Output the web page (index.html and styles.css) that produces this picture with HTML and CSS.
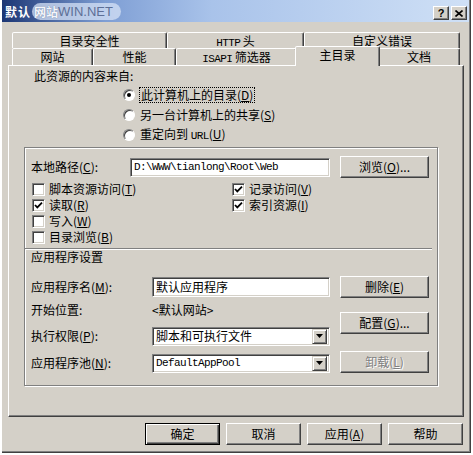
FILE: index.html
```html
<!DOCTYPE html>
<html lang="zh-CN">
<head>
  <meta charset="UTF-8">
  <title>默认网站 属性</title>
  <link rel="stylesheet" href="styles.css">
</head>
<body>
  <div class="window">
    <div class="titlebar">
      <span class="title">默认</span>
      <span class="watermark">网站<span class="wm-latin">WIN.NET</span></span>
      <div class="caption-buttons">
        <span class="cap-btn help">?</span>
        <span class="cap-btn">
          <svg width="8" height="7" viewBox="0 0 8 7"><path d="M0.5 0.5 L7.5 6.5 M7.5 0.5 L0.5 6.5" stroke="#000" stroke-width="1.6"/></svg>
        </span>
      </div>
    </div>

    <div class="client">
      <div class="tabs">
        <div class="tab-row">
          <div class="tab tab-security">目录安全性</div>
          <div class="tab tab-http"><span class="mono">HTTP</span> 头</div>
          <div class="tab tab-errors">自定义错误</div>
        </div>
        <div class="tab-row front">
          <div class="tab tab-site">网站</div>
          <div class="tab tab-perf">性能</div>
          <div class="tab tab-isapi"><span class="mono">ISAPI</span> 筛选器</div>
          <div class="tab tab-home active">主目录</div>
          <div class="tab tab-docs">文档</div>
        </div>
      </div>

      <div class="panel">
        <div class="source-title">此资源的内容来自:</div>
        <div class="radios">
          <div class="radio-row">
            <span class="radio checked"></span>
            <span class="focus">此计算机上的目录(<u>D</u>)</span>
          </div>
          <div class="radio-row">
            <span class="radio"></span>
            <span>另一台计算机上的共享(<u>S</u>)</span>
          </div>
          <div class="radio-row">
            <span class="radio"></span>
            <span>重定向到 <span class="mono">URL</span>(<u>U</u>)</span>
          </div>
        </div>

        <div class="group">
          <div class="path-row">
            <span class="label">本地路径(<u>C</u>):</span>
            <div class="textbox path"><span class="mono">D:\WWW\tianlong\Root\Web</span></div>
            <button class="btn">浏览(<u>O</u>)...</button>
          </div>

          <div class="checks">
            <div class="check-col">
              <div class="check-row"><span class="checkbox"></span>脚本资源访问(<u>T</u>)</div>
              <div class="check-row"><span class="checkbox checked"><svg width="11" height="11" viewBox="0 0 11 11"><path d="M2 5 L4.3 7.4 L9 2.6" fill="none" stroke="#000" stroke-width="1.8"/></svg></span>读取(<u>R</u>)</div>
              <div class="check-row"><span class="checkbox"></span>写入(<u>W</u>)</div>
              <div class="check-row"><span class="checkbox"></span>目录浏览(<u>B</u>)</div>
            </div>
            <div class="check-col">
              <div class="check-row"><span class="checkbox checked"><svg width="11" height="11" viewBox="0 0 11 11"><path d="M2 5 L4.3 7.4 L9 2.6" fill="none" stroke="#000" stroke-width="1.8"/></svg></span>记录访问(<u>V</u>)</div>
              <div class="check-row"><span class="checkbox checked"><svg width="11" height="11" viewBox="0 0 11 11"><path d="M2 5 L4.3 7.4 L9 2.6" fill="none" stroke="#000" stroke-width="1.8"/></svg></span>索引资源(<u>I</u>)</div>
            </div>
          </div>

          <div class="separator"></div>
          <div class="app-title">应用程序设置</div>

          <div class="app">
            <div class="app-fields">
              <div class="field-row first">
                <span class="label">应用程序名(<u>M</u>):</span>
                <div class="textbox">默认应用程序</div>
              </div>
              <div class="field-row second">
                <span class="label">开始位置:</span>
                <span class="value">&lt;默认网站&gt;</span>
              </div>
              <div class="field-row third">
                <span class="label">执行权限(<u>P</u>):</span>
                <div class="select">
                  <span class="select-text">脚本和可执行文件</span>
                  <span class="drop"><svg width="7" height="4" viewBox="0 0 7 4"><path d="M0 0 H7 L3.5 4 Z" fill="#000"/></svg></span>
                </div>
              </div>
              <div class="field-row fourth">
                <span class="label">应用程序池(<u>N</u>):</span>
                <div class="select">
                  <span class="select-text mono">DefaultAppPool</span>
                  <span class="drop"><svg width="7" height="4" viewBox="0 0 7 4"><path d="M0 0 H7 L3.5 4 Z" fill="#000"/></svg></span>
                </div>
              </div>
            </div>
            <div class="app-buttons">
              <button class="btn">删除(<u>E</u>)</button>
              <button class="btn config">配置(<u>G</u>)...</button>
              <button class="btn unload" disabled>卸载(<u>L</u>)</button>
            </div>
          </div>
        </div>
      </div>

      <div class="footer">
        <button class="btn dialog default">确定</button>
        <button class="btn dialog">取消</button>
        <button class="btn dialog">应用(<u>A</u>)</button>
        <button class="btn dialog">帮助</button>
      </div>
    </div>
  </div>
</body>
</html>
```

FILE: styles.css
```css
* {
  box-sizing: border-box;
}
body {
  margin: 0;
  background-color: #fff;
  font-family: "Noto Sans CJK SC", "Noto Sans", sans-serif;
  font-size: 12px;
  line-height: 14px;
  color: #000;
}
u {
  text-decoration: underline;
  text-underline-offset: 1px;
}
.mono {
  font-family: "Liberation Mono", "Noto Sans CJK SC", monospace;
  font-size: 11px;
  letter-spacing: -0.6px;
}

/* window frame */
.window {
  width: 471px;
  height: 453px;
  background-color: #d4d0c8;
  box-shadow: inset 2px 0 #fff, inset -1px -1px #404040, inset -2px -2px #808080;
}
.titlebar {
  height: 22px;
  margin: 0 2px;
  padding: 0 2px 2px 3px;
  display: flex;
  align-items: flex-end;
  background: linear-gradient(90deg, #1c3674 0, #7e9ed4 22%, #a9c3ea 45%, #cfe0f6 100%);
}
.title {
  color: #fff;
  font-weight: bold;
  letter-spacing: 1px;
  margin-bottom: 1px;
}
.watermark {
  height: 17px;
  margin-left: 1px;
  padding: 0 8px 0 2px;
  border-radius: 9px;
  display: flex;
  align-items: center;
  background-color: rgba(214, 226, 246, 0.75);
  color: #f4f6fb;
  font-weight: bold;
  text-shadow: 0 0 1px #5d6f96;
}
.wm-latin {
  color: #5d6f96;
  text-shadow: none;
  font-family: "Liberation Sans", sans-serif;
  font-weight: normal;
  font-size: 13px;
}
.caption-buttons {
  margin-left: auto;
  display: flex;
  gap: 2px;
}
.cap-btn {
  width: 16px;
  height: 14px;
  display: flex;
  align-items: center;
  justify-content: center;
  background-color: #d4d0c8;
  border: 1px solid;
  border-color: #fff #404040 #404040 #fff;
  box-shadow: inset -1px -1px #808080;
  font-family: "Liberation Sans", sans-serif;
  font-weight: bold;
  font-size: 11px;
}

/* tabs */
.client {
  padding: 10px 7px 0 8px;
}
.tabs {
  margin-left: 4px;
}
.tab-row {
  display: flex;
}
.tab {
  height: 16px;
  border: 1px solid;
  border-bottom: none;
  border-color: #fff #404040 transparent #fff;
  border-radius: 2px 2px 0 0;
  box-shadow: inset -1px 0 #808080;
  text-align: center;
  line-height: 15px;
  background-color: #d4d0c8;
}
.front .tab {
  height: 17px;
}
.tab-security { width: 155px; }
.tab-http { width: 137px; }
.tab-errors { width: 156px; }
.tab-site { width: 81px; }
.tab-perf { width: 83px; }
.tab-isapi { width: 121px; }
.tab-docs { width: 82px; }
.front .tab.active {
  position: relative;
  z-index: 1;
  width: 85px;
  height: 20px;
  margin: -2px -2px -1px;
}

/* panel */
.panel {
  height: 352px;
  border: 1px solid;
  border-color: #fff #404040 #404040 #fff;
  box-shadow: inset -1px -1px #808080;
  padding-left: 15px;
}
.source-title {
  margin: 3px 0 0 10px;
}
.radios {
  margin: 2px 0 0 99px;
}
.radio-row {
  display: flex;
  align-items: center;
  gap: 5px;
  height: 20px;
}
.radio {
  width: 12px;
  height: 12px;
  border-radius: 50%;
  background-color: #fff;
  border: 1px solid;
  border-color: #808080 #fff #fff #808080;
  box-shadow: inset 1px 1px #404040;
  display: flex;
  align-items: center;
  justify-content: center;
}
.radio.checked::after {
  content: "";
  width: 4px;
  height: 4px;
  border-radius: 50%;
  background-color: #000;
}
.focus {
  outline: 1px dotted #000;
  padding: 0 1px;
}

.group {
  margin-top: 2px;
  width: 414px;
  height: 239px;
  border: 1px solid #808080;
  box-shadow: inset 1px 1px #fff, 1px 1px #fff;
}
.path-row {
  display: flex;
  align-items: center;
  height: 22px;
  margin: 8px 0 0 6px;
}
.path-row .label {
  width: 99px;
}
.textbox {
  height: 20px;
  width: 178px;
  display: flex;
  align-items: center;
  padding-left: 3px;
  background-color: #fff;
  border: 1px solid;
  border-color: #808080 #fff #fff #808080;
  box-shadow: inset 1px 1px #404040, inset -1px -1px #d4d0c8;
  white-space: nowrap;
  overflow: hidden;
}
.textbox.path {
  width: 200px;
  height: 19px;
}
.btn {
  width: 89px;
  height: 22px;
  padding: 0;
  display: flex;
  align-items: center;
  justify-content: center;
  font: inherit;
  color: #000;
  background-color: #d4d0c8;
  border: 1px solid;
  border-color: #fff #404040 #404040 #fff;
  box-shadow: inset -1px -1px #808080;
}
.path-row .btn {
  margin-left: 10px;
}
.btn:disabled {
  color: #808080;
  text-shadow: 1px 1px #fff;
}

.checks {
  display: flex;
  margin: 3px 0 0 7px;
}
.check-col {
  width: 200px;
}
.check-row {
  display: flex;
  align-items: center;
  height: 16px;
}
.checkbox {
  width: 13px;
  height: 13px;
  margin-right: 4px;
  display: flex;
  align-items: center;
  justify-content: center;
  background-color: #fff;
  border: 1px solid;
  border-color: #808080 #fff #fff #808080;
  box-shadow: inset 1px 1px #404040, inset -1px -1px #d4d0c8;
}

.separator {
  margin-top: 3px;
  width: 407px;
  border-top: 1px solid #808080;
  border-bottom: 1px solid #fff;
}
.app-title {
  margin-left: 6px;
}
.app {
  display: flex;
  margin: 12px 0 0 6px;
}
.app-fields {
  width: 299px;
}
.field-row {
  display: flex;
  align-items: center;
  height: 20px;
}
.field-row .label {
  width: 121px;
}
.field-row.first {
  height: 22px;
}
.field-row.second {
  margin-top: 2px;
}
.field-row.third {
  margin-top: 6px;
}
.field-row.fourth {
  margin-top: 7px;
}
.select {
  width: 178px;
  height: 19px;
  display: flex;
  align-items: center;
  padding: 0 2px 0 3px;
  background-color: #fff;
  border: 1px solid;
  border-color: #808080 #fff #fff #808080;
  box-shadow: inset 1px 1px #404040, inset -1px -1px #d4d0c8;
}
.select-text {
  flex: 1;
  white-space: nowrap;
}
.drop {
  width: 15px;
  height: 15px;
  display: flex;
  align-items: center;
  justify-content: center;
  background-color: #d4d0c8;
  border: 1px solid;
  border-color: #d4d0c8 #404040 #404040 #d4d0c8;
  box-shadow: inset 1px 1px #fff, inset -1px -1px #808080;
}
.app-buttons {
  margin-left: 10px;
  display: flex;
  flex-direction: column;
}
.app-buttons .config {
  margin-top: 14px;
}
.app-buttons .unload {
  margin-top: 17px;
}

/* dialog buttons */
.footer {
  display: flex;
  justify-content: flex-end;
  gap: 6px;
  margin-top: 6px;
  padding-right: 1px;
}
.btn.dialog {
  width: 75px;
}
.btn.default {
  border-color: #000;
  box-shadow: inset 1px 1px #fff, inset -1px -1px #404040, inset -2px -2px #808080;
}
```
